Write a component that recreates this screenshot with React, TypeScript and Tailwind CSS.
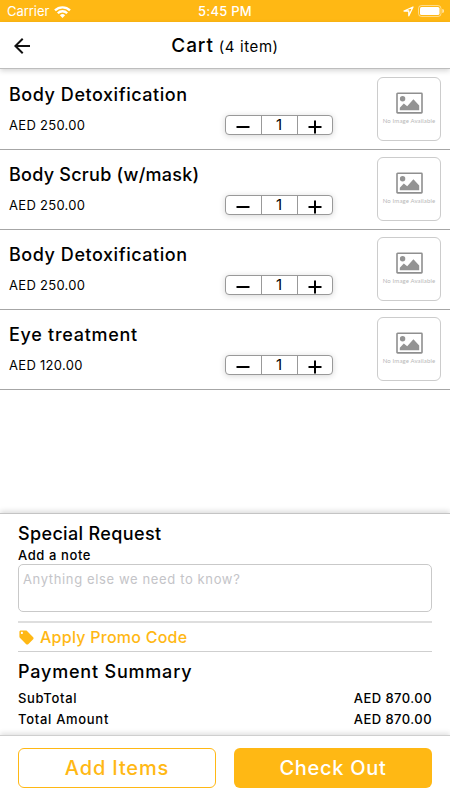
import { MdArrowBack, MdLocalOffer } from 'react-icons/md';

interface CartItem {
  id: number;
  name: string;
  price: string;
  nameClass: string;
}

const ITEMS: CartItem[] = [
  { id: 1, name: 'Body Detoxification', price: 'AED 250.00', nameClass: 'tracking-[0.55px]' },
  { id: 2, name: 'Body Scrub (w/mask)', price: 'AED 250.00', nameClass: 'tracking-[0.25px]' },
  { id: 3, name: 'Body Detoxification', price: 'AED 250.00', nameClass: 'tracking-[0.55px]' },
  { id: 4, name: 'Eye treatment', price: 'AED 120.00', nameClass: 'tracking-[0.72px]' },
];

const StatusBar = () => (
  <div className="relative flex h-[22px] shrink-0 items-center justify-between bg-[#ffb814] pl-[7px] pr-[6px] text-[13px] text-white">
    <div className="flex items-center gap-[5px] pt-px">
      <span className="tracking-[-0.05px]">Carrier</span>
      <svg width="17" height="12" viewBox="0 0 17 12" fill="none" stroke="currentColor" strokeWidth="2.3">
        <path d="M1 4.4a10.6 10.6 0 0 1 15 0" />
        <path d="M3.8 7.2a6.7 6.7 0 0 1 9.4 0" />
        <path d="M8.5 12 5.9 9.3a3.7 3.7 0 0 1 5.2 0z" fill="currentColor" stroke="none" />
      </svg>
    </div>
    <span className="absolute left-1/2 -translate-x-1/2 whitespace-nowrap pt-px font-medium tracking-[0.25px]">5:45 PM</span>
    <div className="flex items-center gap-[4px]">
      <svg width="11" height="11" viewBox="0 0 11 11" fill="none" stroke="currentColor" strokeWidth="1.3" strokeLinejoin="round">
        <path d="M10 1 1 5h4.8v4.8z" />
      </svg>
      <svg width="26" height="12" viewBox="0 0 26 12" fill="none">
        <rect x="0.5" y="0.5" width="22.5" height="11" rx="3" stroke="white" strokeOpacity="0.5" />
        <rect x="2" y="2" width="19.5" height="8" rx="1.6" fill="white" />
        <path d="M24.2 4v4a2 2 0 0 0 0-4z" fill="white" fillOpacity="0.6" />
      </svg>
    </div>
  </div>
);

const Header = () => (
  <header className="relative z-10 flex h-[47px] shrink-0 items-center justify-center border-b border-[#bdbdbd] bg-white shadow-[0_2px_5px_rgba(0,0,0,0.16)]">
    <button className="absolute left-[10px] top-[12px] text-[#111]">
      <MdArrowBack size={24} />
    </button>
    <h1 className="flex items-baseline gap-[5px] pt-[3px]">
      <span className="text-[19px] font-medium tracking-[0.9px]">Cart</span>
      <span className="text-[15px] tracking-[0.6px]">(4 item)</span>
    </h1>
  </header>
);

const Stepper = () => (
  <div className="flex h-[20px] w-[108px] rounded-[4px] border border-[#999] bg-white shadow-[0_1px_6px_rgba(0,0,0,0.16)]">
    <button className="flex flex-1 items-center justify-center">
      <svg width="14" height="14" viewBox="0 0 14 14" className="mt-[4px]">
        <path d="M0.5 7h13" stroke="black" strokeWidth="2" />
      </svg>
    </button>
    <span className="flex w-[37px] items-center justify-center border-x border-[#999] text-[15px]">1</span>
    <button className="flex flex-1 items-center justify-center">
      <svg width="14" height="14" viewBox="0 0 14 14" className="mt-[4px]">
        <path d="M0.5 7h13M7 0.5v13" stroke="black" strokeWidth="2" />
      </svg>
    </button>
  </div>
);

const NoImage = () => (
  <div className="flex h-[64px] w-[64px] flex-col items-center rounded-[6px] border border-[#ccc] bg-white pt-[14px]">
    <svg width="27" height="22" viewBox="0 0 27 22" fill="none">
      <rect x="1" y="1.3" width="25" height="19.6" rx="0.6" stroke="#8f8f8f" strokeWidth="1.6" />
      <circle cx="6.6" cy="6.8" r="2.7" fill="#949494" />
      <path d="M3.8 18.2v-2.4l4-4.4 3.4 2.8L17.4 7.2l5.8 6.2v4.8z" fill="#949494" />
    </svg>
    <span className="mt-[2px] whitespace-nowrap font-['Lato'] text-[6px] leading-[9px] tracking-[0.13px] text-[#b8b8b8]">No Image Available</span>
  </div>
);

const CartRow = ({ item }: { item: CartItem }) => (
  <li className="flex h-[80px] border-b border-[#a6a6a6] px-[9px]">
    <div className="w-[216px] pt-[13px]">
      <h2 className={`whitespace-nowrap text-[18px] font-medium leading-[24px] ${item.nameClass}`}>{item.name}</h2>
      <p className="mt-[9px] text-[13px] leading-[18px] tracking-[0.3px]">{item.price}</p>
    </div>
    <div className="pt-[45px]">
      <Stepper />
    </div>
    <div className="ml-auto pt-[7px]">
      <NoImage />
    </div>
  </li>
);

const SummaryRow = ({ label, value }: { label: string; value: string }) => (
  <div className="flex h-[21px] items-center justify-between text-[13px] font-medium">
    <span className="tracking-[0.7px]">{label}</span>
    <span className="tracking-[0.45px]">{value}</span>
  </div>
);

export default function App() {
  return (
    <div className="flex h-[800px] w-[450px] flex-col overflow-hidden bg-white font-['Inter',sans-serif] text-black">
      <StatusBar />
      <Header />
      <ul className="flex-1 pt-px">
        {ITEMS.map((item) => (
          <CartRow key={item.id} item={item} />
        ))}
      </ul>

      <section className="h-[222px] shrink-0 border-t border-[#c4c4c4] px-[18px] pt-[8px] shadow-[0_-2px_5px_rgba(0,0,0,0.14)]">
        <h2 className="text-[18px] font-medium leading-[24px] tracking-[0.35px]">Special Request</h2>
        <p className="mt-px text-[13px] font-medium leading-[17px] tracking-[0.6px]">Add a note</p>
        <textarea
          className="block h-[48px] w-full resize-none rounded-[5px] border border-[#c9c9c9] px-[4px] pt-[5px] text-[13px] leading-[18px] tracking-[0.63px] outline-none placeholder:text-[#c4c4c8]"
          placeholder="Anything else we need to know?"
        />
        <button className="mt-[9px] flex h-[31px] w-full items-center gap-[5px] border-b border-t-2 border-b-[#cfcfcf] border-t-[#dedede] text-[#ffb814]">
          <MdLocalOffer size={17} />
          <span className="text-[16px] font-medium leading-[20px] tracking-[0.25px]">Apply Promo Code</span>
        </button>
        <h2 className="mt-[8px] text-[18px] font-medium leading-[24px] tracking-[0.8px]">Payment Summary</h2>
        <div className="mt-[4px]">
          <SummaryRow label="SubTotal" value="AED 870.00" />
          <SummaryRow label="Total Amount" value="AED 870.00" />
        </div>
      </section>

      <footer className="z-10 flex h-[65px] shrink-0 justify-between border-t border-[#cfcfcf] bg-white px-[18px] pt-[12px] shadow-[0_-2px_5px_rgba(0,0,0,0.12)]">
        <button className="h-[40px] w-[198px] rounded-[6px] border border-[#ffb814] text-[20px] font-medium tracking-[0.85px] text-[#ffb814]">Add Items</button>
        <button className="h-[40px] w-[198px] rounded-[6px] bg-[#ffb814] text-[20px] font-medium tracking-[0.7px] text-white">Check Out</button>
      </footer>
    </div>
  );
}
